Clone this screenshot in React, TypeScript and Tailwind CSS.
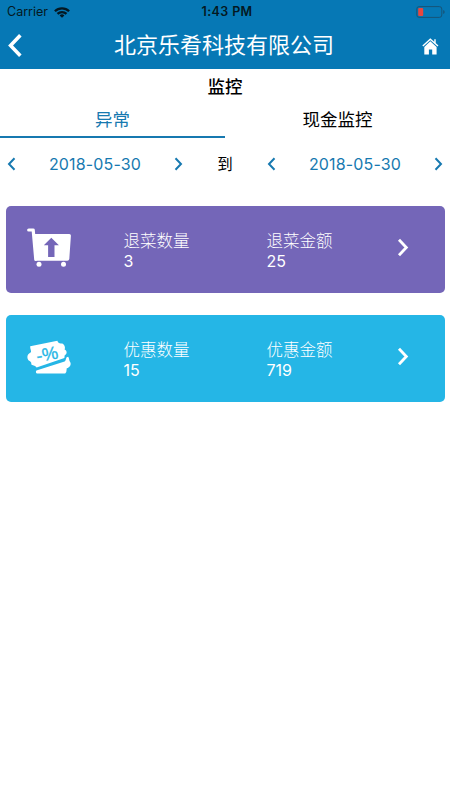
import type { ReactNode } from 'react';

interface ChevronProps {
  dir: 'left' | 'right';
  className: string;
  strokeWidth?: number;
}

const Chevron = ({ dir, className, strokeWidth = 2 }: ChevronProps) => (
  <svg viewBox="0 0 9 14" className={className} fill="none" stroke="currentColor" strokeWidth={strokeWidth}>
    <path d={dir === 'left' ? 'M7.5 1.2 2 7l5.5 5.8' : 'M1.5 1.2 7 7l-5.5 5.8'} />
  </svg>
);

const CartIcon = () => (
  <svg viewBox="0 0 44 39" className="w-[44px] h-[39px]">
    <path d="M1.7 2H6.2L8.8 31.5" fill="none" stroke="white" strokeWidth="3.2" strokeLinecap="round" strokeLinejoin="round" />
    <path
      fill="white"
      fillRule="evenodd"
      d="M7 6H42.3Q44 6 43.9 7.7L42.3 30.9Q42.1 32.7 40.3 32.7H9.8Q8.4 32.7 8.2 31.1ZM24.3 9.7 16.8 17.2H21.1V29H27.5V17.2H31.9Z"
    />
    <circle cx="12" cy="36.3" r="2.5" fill="white" />
    <circle cx="36.5" cy="36.3" r="2.5" fill="white" />
  </svg>
);

const CouponIcon = () => (
  <svg viewBox="0 0 44 34" className="w-[44px] h-[34px]">
    <path
      fill="white"
      d="M3.2 6.2 30.4.8C31 3.2 32.8 4 35.3 3.4C37.4 4.6 38.6 7 37.6 9.4C40.2 10.4 40.4 14 37.6 15.6L37.4 18L9.6 27.6C8.8 25.8 6.4 26 4.3 24.6C4.6 22 3.5 21.3 1.4 20.2C-.3 18-.1 14.5 3.6 12.6C4.8 11 3 9.2 3.2 6.2Z"
    />
    <path
      fill="white"
      d="M9.4 30.6 37.6 21.6C39.6 20.4 38.3 16.8 41.2 16.8C42.4 18.4 41.9 20.8 43.3 22.2C44.6 25.4 42.3 27.4 39.6 28.6Q39.8 32.6 38.2 33.6H9.8Q8.2 32.2 9.4 30.6Z"
    />
    <text
      x="20"
      y="20.4"
      textAnchor="middle"
      transform="rotate(-11 20 14)"
      className="fill-[#25b6e6] stroke-[#25b6e6] stroke-[0.3px] font-['Liberation_Sans',sans-serif] text-[18px]"
    >
      -%
    </text>
  </svg>
);

const DatePicker = ({ date }: { date: string }) => (
  <div className="flex w-[176px] items-center justify-between text-[#1779b0]">
    <Chevron dir="left" className="w-[9px] h-[14px]" />
    <span className="text-[16px] tracking-[0.15px]">{date}</span>
    <Chevron dir="right" className="w-[9px] h-[14px]" />
  </div>
);

interface CardProps {
  color: string;
  icon: ReactNode;
  items: { label: string; value: number }[];
}

const StatCard = ({ color, icon, items }: CardProps) => (
  <div className={`flex h-[87px] items-center rounded-[5px] pl-[21.5px] pb-[4px] text-white ${color}`}>
    <div className="w-[96.5px]">{icon}</div>
    {items.map((item) => (
      <div key={item.label} className="w-[143px] pt-[7px] text-[16.5px] leading-[20px]">
        <p className="font-light">{item.label}</p>
        <p className="text-[16px]">{item.value}</p>
      </div>
    ))}
    <Chevron dir="right" className="-ml-[12.5px] w-[12px] h-[19px]" strokeWidth={2.1} />
  </div>
);

export default function App() {
  return (
    <div className="h-[800px] w-[450px] overflow-hidden bg-white font-['Inter','Noto_Sans_CJK_SC',sans-serif] text-black">
      {/* Header */}
      <header className="h-[69px] bg-[#0678b5]">
        <div className="grid h-[24px] grid-cols-3 items-center pl-[7px] pr-[5px] text-[12.5px] text-[#041822]">
          <div className="flex items-center gap-[6px]">
            <span>Carrier</span>
            <svg viewBox="0 0 16 11" className="w-[16px] h-[11px]" fill="none" stroke="currentColor" strokeWidth="2.3">
              <path d="M.9 4.3a10 10 0 0 1 14.2 0M3.5 6.9a6.4 6.4 0 0 1 9 0" />
              <path d="M8 10.8 5.6 8.4a3.4 3.4 0 0 1 4.8 0Z" fill="currentColor" stroke="none" />
            </svg>
          </div>
          <span className="pl-[2px] text-center font-semibold tracking-[0.4px]">1:43 PM</span>
          <svg viewBox="0 0 29 12" className="-mt-px w-[29px] h-[12px] justify-self-end">
            <rect x=".8" y=".6" width="25" height="10.8" rx="2.4" fill="none" stroke="#175478" />
            <rect x="2.2" y="2" width="5" height="8" rx="1" fill="#e8473f" />
            <path d="M27.2 4v4q1.5-.6 1.5-2t-1.5-2Z" fill="#175478" />
          </svg>
        </div>
        <div className="flex h-[42px] items-center justify-between pl-[7px] pr-[11px] text-white">
          <Chevron dir="left" className="w-[16px] h-[25px]" strokeWidth={2} />
          <h1 className="pl-[3px] text-[22px] leading-none">北京乐肴科技有限公司</h1>
          <svg viewBox="0 0 17 17" className="mt-[2px] w-[17px] h-[17px]" fill="white">
            <path d="M8.3 3.3 14.6 9V16.4H10.2V11.4H6.9V16.4H2.3V9Z" />
            <path d="M.8 8 8.3 1.2 16 8M13 1.2V5" fill="none" stroke="white" strokeWidth="1.4" />
          </svg>
        </div>
      </header>

      <h2 className="h-[34px] text-center text-[17.5px] leading-[36px] font-medium">监控</h2>

      {/* Tabs */}
      <div className="grid h-[34px] grid-cols-2 text-center text-[17.5px] leading-[33px]">
        <div className="border-b-2 border-[#1779b0] text-[#1779b0]">异常</div>
        <div>现金监控</div>
      </div>

      {/* Date range */}
      <div className="flex h-[53px] items-center justify-between pl-[7px] pr-[7px]">
        <DatePicker date="2018-05-30" />
        <span className="pt-[2px] text-[15.5px]">到</span>
        <DatePicker date="2018-05-30" />
      </div>

      <div className="flex flex-col gap-[22px] px-[5.5px] pt-[16px]">
        <StatCard
          color="bg-[#7466b8]"
          icon={<CartIcon />}
          items={[
            { label: '退菜数量', value: 3 },
            { label: '退菜金额', value: 25 },
          ]}
        />
        <StatCard
          color="bg-[#25b6e6]"
          icon={<CouponIcon />}
          items={[
            { label: '优惠数量', value: 15 },
            { label: '优惠金额', value: 719 },
          ]}
        />
      </div>
    </div>
  );
}
